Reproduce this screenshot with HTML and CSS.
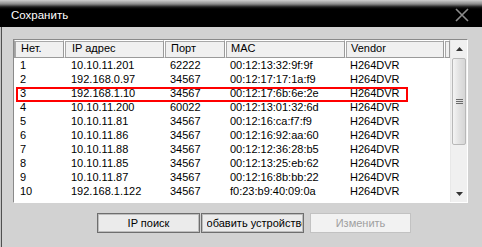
FILE: index.html
```html
<!DOCTYPE html>
<html>
<head>
<meta charset="utf-8">
<link rel="stylesheet" href="styles.css">
</head>
<body>
<div class="window">
  <div class="titlebar">
    <span class="title">Сохранить</span>
    <svg class="close" width="14" height="14" viewBox="0 0 14 14"><path d="M1 1 L13 13 M13 1 L1 13" stroke="#8c8c8c" stroke-width="1.6" fill="none"/></svg>
  </div>
  <div class="content">
    <div class="listbox">
      <div class="table">
        <div class="grid head">
          <div class="c c1">Нет.</div>
          <div class="c c2">IP адрес</div>
          <div class="c c3">Порт</div>
          <div class="c c4">MAC</div>
          <div class="c c5">Vendor</div>
          <div class="c c6"></div>
        </div>
        <div class="grid row"><div class="c c1">1</div><div class="c c2">10.10.11.201</div><div class="c c3">62222</div><div class="c c4">00:12:13:32:9f:9f</div><div class="c c5">H264DVR</div></div>
        <div class="grid row"><div class="c c1">2</div><div class="c c2">192.168.0.97</div><div class="c c3">34567</div><div class="c c4">00:12:17:17:1a:f9</div><div class="c c5">H264DVR</div></div>
        <div class="grid row marked"><div class="c c1">3</div><div class="c c2">192.168.1.10</div><div class="c c3">34567</div><div class="c c4">00:12:17:6b:6e:2e</div><div class="c c5">H264DVR</div><span class="mark"></span></div>
        <div class="grid row"><div class="c c1">4</div><div class="c c2">10.10.11.200</div><div class="c c3">60022</div><div class="c c4">00:12:13:01:32:6d</div><div class="c c5">H264DVR</div></div>
        <div class="grid row"><div class="c c1">5</div><div class="c c2">10.10.11.81</div><div class="c c3">34567</div><div class="c c4">00:12:16:ca:f7:f9</div><div class="c c5">H264DVR</div></div>
        <div class="grid row"><div class="c c1">6</div><div class="c c2">10.10.11.86</div><div class="c c3">34567</div><div class="c c4">00:12:16:92:aa:60</div><div class="c c5">H264DVR</div></div>
        <div class="grid row"><div class="c c1">7</div><div class="c c2">10.10.11.88</div><div class="c c3">34567</div><div class="c c4">00:12:12:36:28:b5</div><div class="c c5">H264DVR</div></div>
        <div class="grid row"><div class="c c1">8</div><div class="c c2">10.10.11.85</div><div class="c c3">34567</div><div class="c c4">00:12:13:25:eb:62</div><div class="c c5">H264DVR</div></div>
        <div class="grid row"><div class="c c1">9</div><div class="c c2">10.10.11.87</div><div class="c c3">34567</div><div class="c c4">00:12:16:8b:bb:22</div><div class="c c5">H264DVR</div></div>
        <div class="grid row"><div class="c c1">10</div><div class="c c2">192.168.1.122</div><div class="c c3">34567</div><div class="c c4">f0:23:b9:40:09:0a</div><div class="c c5">H264DVR</div></div>
      </div>
      <div class="scrollbar">
        <div class="sb-btn"><svg width="7" height="4" viewBox="0 0 7 4"><path d="M3.5 0 L7 4 L0 4 Z" fill="#333"/></svg></div>
        <div class="sb-track">
          <div class="thumb"><span class="grip"></span></div>
        </div>
        <div class="sb-btn"><svg width="7" height="4" viewBox="0 0 7 4"><path d="M0 0 L7 0 L3.5 4 Z" fill="#333"/></svg></div>
      </div>
    </div>
    <div class="buttons">
      <div class="btn b1">IP поиск</div>
      <div class="btn b2"><span class="clip"><span class="shift">Добавить устройство</span></span></div>
      <div class="btn b3 disabled">Изменить</div>
    </div>
  </div>
</div>
</body>
</html>
```

FILE: styles.css
```css
* { box-sizing: border-box; }
html, body { margin: 0; padding: 0; }
body {
  width: 482px;
  height: 247px;
  overflow: hidden;
  background: #d2d2d2;
  font-family: "Liberation Sans", Arial, sans-serif;
  font-size: 11px;
  color: #000;
}
.window {
  width: 482px;
  height: 247px;
  display: flex;
  flex-direction: column;
  box-shadow: inset 1px 0 0 #c4c4c4, inset 2px 0 0 #505050;
}
.titlebar {
  height: 27px;
  flex: none;
  background: linear-gradient(to bottom, #cfcfcf 0, #8a8a8a 4px, #1a1a1a 7px, #000 9px, #000 100%);
  display: flex;
  align-items: center;
  padding: 3px 13px 0 11px;
  position: relative;
}
.title {
  color: #fff;
  font-size: 11.5px;
  flex: 1;
}
.close { display: block; margin-top: 0; }
.content {
  flex: 1;
  padding: 12px 0 0 13px;
}
.listbox {
  width: 455px;
  height: 164px;
  border: 1px solid;
  border-color: #8a8a8a #fff #fff #8a8a8a;
  background: #fff;
  display: flex;
}
.table { width: 436px; flex: none; }
.grid {
  display: grid;
  grid-template-columns: 50px 100px 61px 120px 99px 6px;
}
.head { height: 18px; }
.head .c {
  background: #f0f0f0;
  border: 1px solid #9a9a9a;
  border-left-color: #fff;
  border-top-color: #fff;
  box-shadow: inset 1px 1px 0 #a8a8a8;
  line-height: 15px;
}
.head .c1 { border-left-color: #a0a0a0; }
.row { height: 14px; line-height: 14px; position: relative; }
.c { white-space: nowrap; overflow: hidden; }
.c1 { padding-left: 6px; }
.c2 { padding-left: 7px; }
.c3 { padding-left: 6px; }
.c4 { padding-left: 5px; }
.c5 { padding-left: 5px; }
.c6 { padding: 0; }
.mark {
  position: absolute;
  left: 2px;
  top: 1px;
  width: 392px;
  height: 15px;
  border: 2px solid #ff0000;
}
.scrollbar {
  width: 17px;
  flex: none;
  background: #f0f0f0;
  display: flex;
  flex-direction: column;
  border-left: 1px solid #e8e8e8;
}
.sb-btn {
  height: 17px;
  flex: none;
  display: flex;
  align-items: center;
  justify-content: center;
}
.sb-track { flex: 1; padding: 1px 1px 0 1px; }
.thumb {
  height: 87px;
  border: 1px solid #b8b8b8;
  border-radius: 2px;
  background: linear-gradient(to right, #f4f4f4, #e2e2e2 50%, #d6d6d6);
  display: flex;
  align-items: center;
  justify-content: center;
}
.grip {
  width: 7px;
  height: 5px;
  border-top: 1px solid #6a6a6a;
  border-bottom: 1px solid #6a6a6a;
  position: relative;
}
.grip::after {
  content: "";
  position: absolute;
  left: 0; right: 0; top: 1px;
  border-top: 1px solid #6a6a6a;
}
.buttons {
  display: flex;
  margin-top: 10px;
  padding-left: 84px;
}
.btn {
  height: 20px;
  display: flex;
  align-items: center;
  justify-content: center;
  background: #ebebeb;
  border: 1px solid #6e6e6e;
  box-shadow: inset 0 0 0 1px #bdbdbd;
  white-space: nowrap;
  overflow: hidden;
}
.b1 { width: 103px; }
.b2 { width: 103px; margin-left: 1px; justify-content: flex-start; }
.b3 { width: 101px; margin-left: 6px; }
.disabled {
  background: #f2f2f2;
  border-color: #c2c2c2;
  box-shadow: none;
  color: #a0a0a0;
}
.clip {
  display: block;
  overflow: hidden;
  width: 95px;
  margin-left: 5px;
  white-space: nowrap;
}
.shift { display: inline-block; margin-left: -8px; }
```
